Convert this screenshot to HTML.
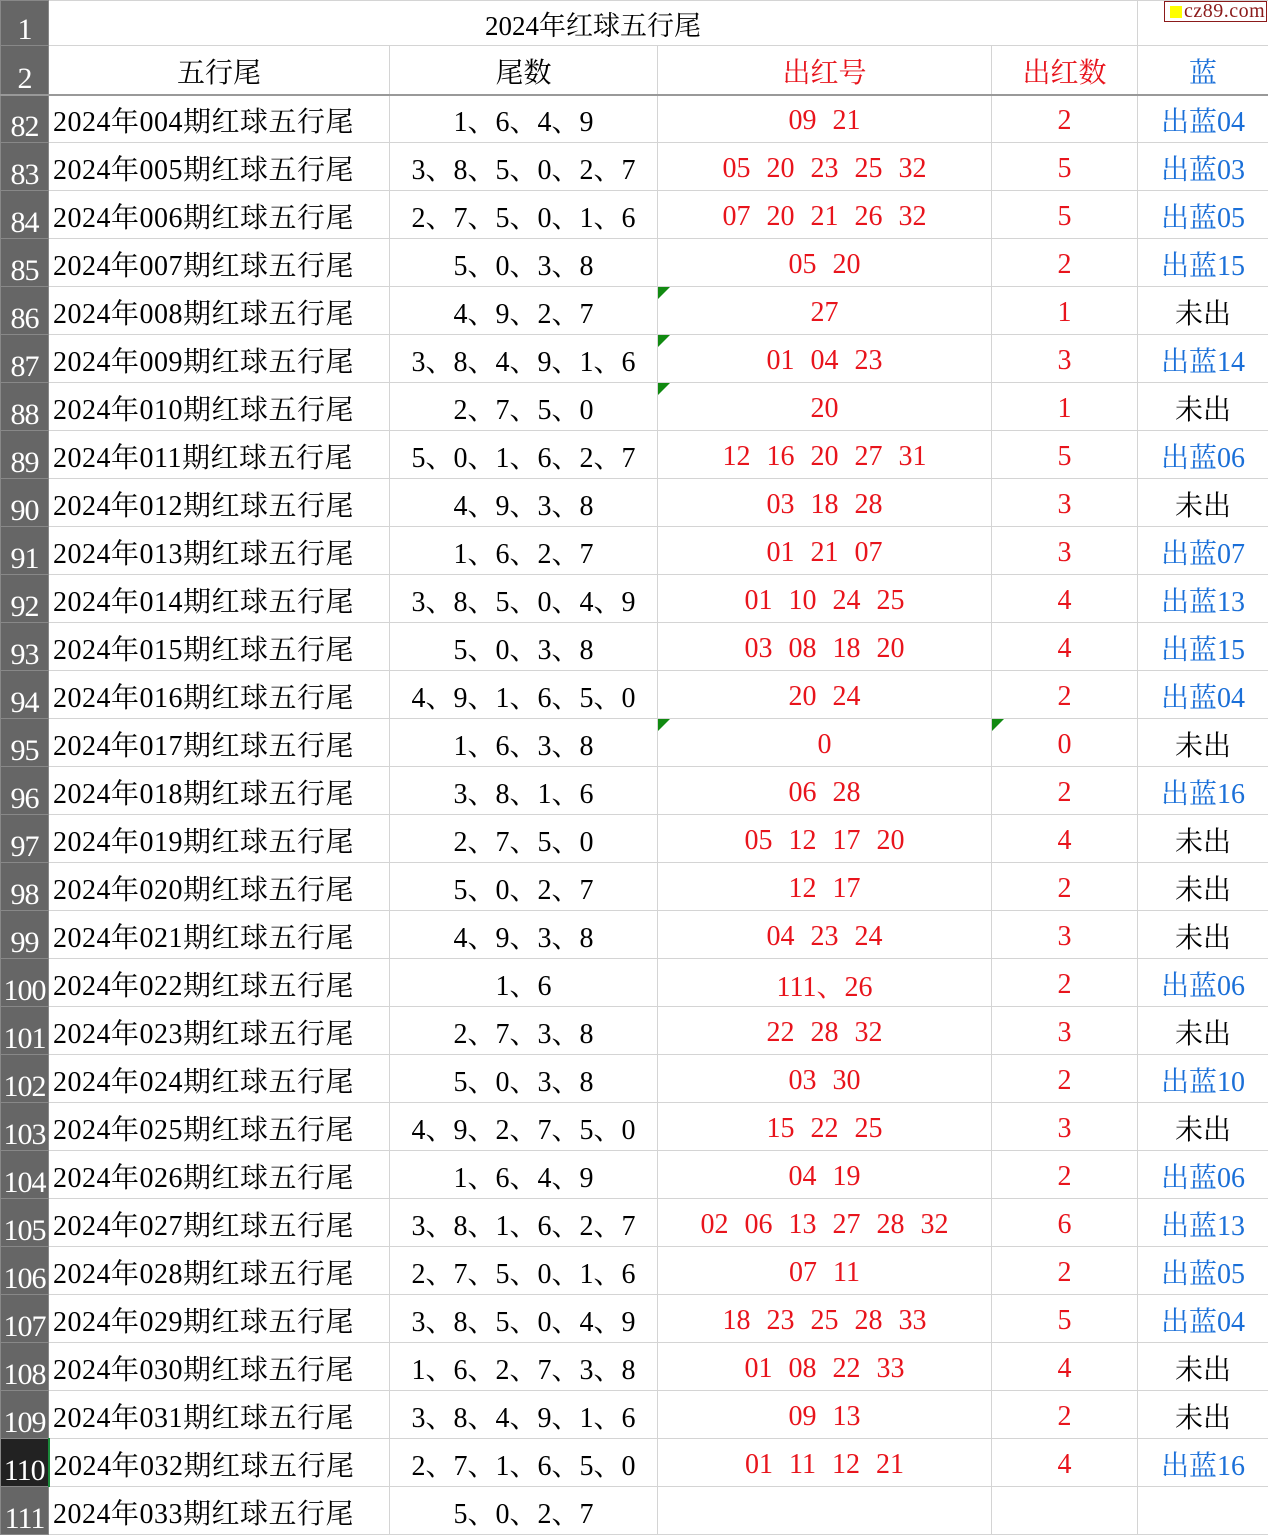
<!DOCTYPE html>
<html><head><meta charset="utf-8"><style>
*{margin:0;padding:0;box-sizing:border-box}
body{width:1268px;height:1533px;overflow:hidden;background:#fff;font-family:"Liberation Serif","Noto Serif CJK SC",serif;}
table{border-collapse:collapse;table-layout:fixed;width:1268px;position:absolute;left:0;top:0}
td{border:1px solid #d4d4d4;height:48px;font-size:28px;text-align:center;white-space:pre;padding-top:2px;overflow:hidden;position:relative;color:#000;word-spacing:9px}
td.h{background:#666;color:#fff;border-color:#888;vertical-align:bottom;padding:0;line-height:30px;font-size:30px;text-align:center;word-spacing:0;letter-spacing:-1px}
td.l{text-align:left;padding-left:4px;word-spacing:0;letter-spacing:0.5px}
td.r{color:#e8141c;padding-top:5px}
td.b{color:#1a6fd8;word-spacing:0}
tr.t td{height:45px}
tr.s td{height:49px;border-bottom:2px solid #999}
td.tri::before{content:"";position:absolute;left:0;top:0;border-top:12px solid #118a11;border-right:12px solid transparent}
.logo{position:absolute;left:1164px;top:1px;width:103px;height:21px;border:1px solid #8b1a1a;background:#fff;color:#8b1a1a;font-size:20px;line-height:19px;padding-left:19px;letter-spacing:0.5px;font-family:"Liberation Serif",serif}
.logo::before{content:"";position:absolute;left:5px;top:4px;width:12px;height:12px;background:#ffff00}
</style></head><body>
<table>
<colgroup><col style="width:48px"><col style="width:341px"><col style="width:268px"><col style="width:334px"><col style="width:146px"><col style="width:131px"></colgroup>
<tr class="t"><td class="h">1</td><td colspan="4" style="font-size:27px;padding-top:0;border-right:1px solid #d4d4d4">2024年红球五行尾</td><td></td></tr>
<tr class="s"><td class="h">2</td><td>五行尾</td><td>尾数</td><td class="r" style="padding-top:2px">出红号</td><td class="r" style="padding-top:2px">出红数</td><td class="b">蓝</td></tr>
<tr><td class="h">82</td><td class="l">2024年004期红球五行尾</td><td>1、6、4、9</td><td class="r">09 21</td><td class="r">2</td><td class="b">出蓝04</td></tr>
<tr><td class="h">83</td><td class="l">2024年005期红球五行尾</td><td>3、8、5、0、2、7</td><td class="r">05 20 23 25 32</td><td class="r">5</td><td class="b">出蓝03</td></tr>
<tr><td class="h">84</td><td class="l">2024年006期红球五行尾</td><td>2、7、5、0、1、6</td><td class="r">07 20 21 26 32</td><td class="r">5</td><td class="b">出蓝05</td></tr>
<tr><td class="h">85</td><td class="l">2024年007期红球五行尾</td><td>5、0、3、8</td><td class="r">05 20</td><td class="r">2</td><td class="b">出蓝15</td></tr>
<tr><td class="h">86</td><td class="l">2024年008期红球五行尾</td><td>4、9、2、7</td><td class="r tri">27</td><td class="r">1</td><td>未出</td></tr>
<tr><td class="h">87</td><td class="l">2024年009期红球五行尾</td><td>3、8、4、9、1、6</td><td class="r tri">01 04 23</td><td class="r">3</td><td class="b">出蓝14</td></tr>
<tr><td class="h">88</td><td class="l">2024年010期红球五行尾</td><td>2、7、5、0</td><td class="r tri">20</td><td class="r">1</td><td>未出</td></tr>
<tr><td class="h">89</td><td class="l">2024年011期红球五行尾</td><td>5、0、1、6、2、7</td><td class="r">12 16 20 27 31</td><td class="r">5</td><td class="b">出蓝06</td></tr>
<tr><td class="h">90</td><td class="l">2024年012期红球五行尾</td><td>4、9、3、8</td><td class="r">03 18 28</td><td class="r">3</td><td>未出</td></tr>
<tr><td class="h">91</td><td class="l">2024年013期红球五行尾</td><td>1、6、2、7</td><td class="r">01 21 07</td><td class="r">3</td><td class="b">出蓝07</td></tr>
<tr><td class="h">92</td><td class="l">2024年014期红球五行尾</td><td>3、8、5、0、4、9</td><td class="r">01 10 24 25</td><td class="r">4</td><td class="b">出蓝13</td></tr>
<tr><td class="h">93</td><td class="l">2024年015期红球五行尾</td><td>5、0、3、8</td><td class="r">03 08 18 20</td><td class="r">4</td><td class="b">出蓝15</td></tr>
<tr><td class="h">94</td><td class="l">2024年016期红球五行尾</td><td>4、9、1、6、5、0</td><td class="r">20 24</td><td class="r">2</td><td class="b">出蓝04</td></tr>
<tr><td class="h">95</td><td class="l">2024年017期红球五行尾</td><td>1、6、3、8</td><td class="r tri">0</td><td class="r tri">0</td><td>未出</td></tr>
<tr><td class="h">96</td><td class="l">2024年018期红球五行尾</td><td>3、8、1、6</td><td class="r">06 28</td><td class="r">2</td><td class="b">出蓝16</td></tr>
<tr><td class="h">97</td><td class="l">2024年019期红球五行尾</td><td>2、7、5、0</td><td class="r">05 12 17 20</td><td class="r">4</td><td>未出</td></tr>
<tr><td class="h">98</td><td class="l">2024年020期红球五行尾</td><td>5、0、2、7</td><td class="r">12 17</td><td class="r">2</td><td>未出</td></tr>
<tr><td class="h">99</td><td class="l">2024年021期红球五行尾</td><td>4、9、3、8</td><td class="r">04 23 24</td><td class="r">3</td><td>未出</td></tr>
<tr><td class="h">100</td><td class="l">2024年022期红球五行尾</td><td>1、6</td><td class="r">111、26</td><td class="r">2</td><td class="b">出蓝06</td></tr>
<tr><td class="h">101</td><td class="l">2024年023期红球五行尾</td><td>2、7、3、8</td><td class="r">22 28 32</td><td class="r">3</td><td>未出</td></tr>
<tr><td class="h">102</td><td class="l">2024年024期红球五行尾</td><td>5、0、3、8</td><td class="r">03 30</td><td class="r">2</td><td class="b">出蓝10</td></tr>
<tr><td class="h">103</td><td class="l">2024年025期红球五行尾</td><td>4、9、2、7、5、0</td><td class="r">15 22 25</td><td class="r">3</td><td>未出</td></tr>
<tr><td class="h">104</td><td class="l">2024年026期红球五行尾</td><td>1、6、4、9</td><td class="r">04 19</td><td class="r">2</td><td class="b">出蓝06</td></tr>
<tr><td class="h">105</td><td class="l">2024年027期红球五行尾</td><td>3、8、1、6、2、7</td><td class="r">02 06 13 27 28 32</td><td class="r">6</td><td class="b">出蓝13</td></tr>
<tr><td class="h">106</td><td class="l">2024年028期红球五行尾</td><td>2、7、5、0、1、6</td><td class="r">07 11</td><td class="r">2</td><td class="b">出蓝05</td></tr>
<tr><td class="h">107</td><td class="l">2024年029期红球五行尾</td><td>3、8、5、0、4、9</td><td class="r">18 23 25 28 33</td><td class="r">5</td><td class="b">出蓝04</td></tr>
<tr><td class="h">108</td><td class="l">2024年030期红球五行尾</td><td>1、6、2、7、3、8</td><td class="r">01 08 22 33</td><td class="r">4</td><td>未出</td></tr>
<tr><td class="h">109</td><td class="l">2024年031期红球五行尾</td><td>3、8、4、9、1、6</td><td class="r">09 13</td><td class="r">2</td><td>未出</td></tr>
<tr><td class="h" style="background:#222;border-right:2px solid #1a8a3a">110</td><td class="l">2024年032期红球五行尾</td><td>2、7、1、6、5、0</td><td class="r">01 11 12 21</td><td class="r">4</td><td class="b">出蓝16</td></tr>
<tr><td class="h">111</td><td class="l">2024年033期红球五行尾</td><td>5、0、2、7</td><td class="r"></td><td class="r"></td><td></td></tr>
</table>
<div class="logo">cz89.com</div>
</body></html>
